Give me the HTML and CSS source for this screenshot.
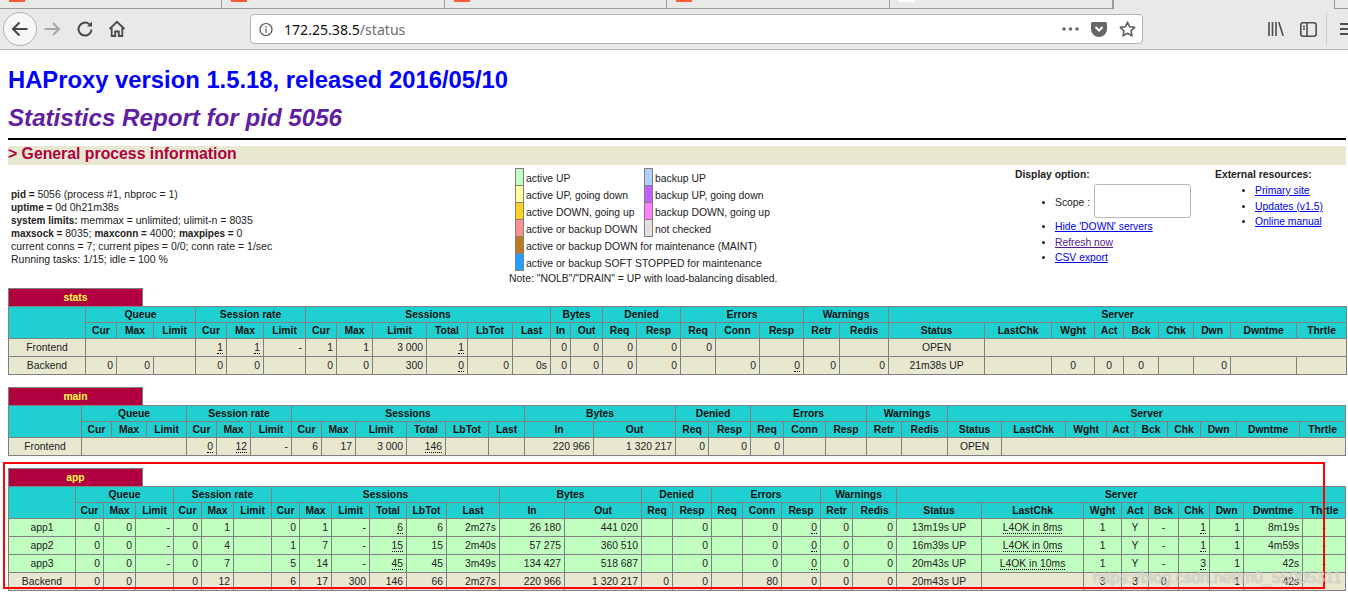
FILE: index.html
```html
<!DOCTYPE html>
<html lang="en">
<head>
<meta charset="utf-8">
<title>Statistics Report for HAProxy</title>
<link rel="stylesheet" href="styles.css">
</head>
<body>
<header class="chrome">
  <div class="tabstrip">
    <div class="tab"><i class="favicon"></i></div>
    <div class="tab"><i class="favicon"></i></div>
    <div class="tab"><i class="favicon"></i></div>
    <div class="tab"><i class="favicon"></i></div>
    <div class="tab tab-blank"><i class="favicon favicon-white"></i></div>
    <div class="tab tab-active"></div>
    <div class="tab tab-end"></div>
  </div>
  <div class="toolbar">
    <div class="btn-back">
      <svg width="20" height="20" viewBox="0 0 20 20" fill="none" stroke="#474747" stroke-width="2"><path d="M17.5 10H3M9.5 3.5 3 10l6.500 6.500"/></svg>
    </div>
    <div class="btn btn-fwd">
      <svg width="18" height="18" viewBox="0 0 18 18" fill="none" stroke="#a8a8a8" stroke-width="2"><path d="M1.500 9H16M10 3l6 6-6 6"/></svg>
    </div>
    <div class="btn">
      <svg width="18" height="18" viewBox="0 0 18 18" fill="none" stroke="#4a4a4a" stroke-width="2"><path d="M15.500 9.500A6.500 6.500 0 1 1 13.300 4.200"/><path d="M16 1.500v5h-5z" fill="#4a4a4a" stroke="none"/></svg>
    </div>
    <div class="btn">
      <svg width="18" height="18" viewBox="0 0 18 18" fill="none" stroke="#4a4a4a" stroke-width="1.800"><path d="M1.500 9 9 1.800 16.500 9"/><path d="M3.700 7.500V16h3.500v-4.500h3.600V16h3.500V7.500"/></svg>
    </div>
    <div class="urlbar">
      <svg class="info" width="14" height="14" viewBox="0 0 14 14" fill="none" stroke="#555" stroke-width="1.200"><circle cx="7" cy="7" r="6"/><path d="M7 6v4.500M7 3.400v1.500"/></svg>
      <span class="host">172.25.38.5</span><span class="path">/status</span>
      <span class="url-icons">
        <svg width="17" height="4" viewBox="0 0 17 4" fill="#6a6a6a"><circle cx="2" cy="2" r="1.800"/><circle cx="8.500" cy="2" r="1.800"/><circle cx="15" cy="2" r="1.800"/></svg>
        <svg width="16" height="15" viewBox="0 0 16 15"><path d="M1.500 0h13A1.500 1.500 0 0 1 16 1.500V7A8 8 0 0 1 0 7V1.500A1.500 1.500 0 0 1 1.500 0z" fill="#666"/><path d="M4.500 5 8 8.500 11.500 5" fill="none" stroke="#fff" stroke-width="2"/></svg>
        <svg width="17" height="16" viewBox="0 0 17 16" fill="none" stroke="#5f5f5f" stroke-width="1.600" stroke-linejoin="round"><path d="M8.500 1.200 10.700 5.800l5 .6-3.700 3.400 1 5-4.500-2.500-4.500 2.500 1-5L1.300 6.400l5-.6z"/></svg>
      </span>
    </div>
    <div class="btn btn-lib">
      <svg width="16" height="14" viewBox="0 0 16 14" fill="none" stroke="#4e4e4e" stroke-width="1.600"><path d="M1 0v14M4.500 0v14M8 0v14M10.800 0l4.400 14"/></svg>
    </div>
    <div class="btn">
      <svg width="17" height="15" viewBox="0 0 17 15" fill="none" stroke="#4e4e4e" stroke-width="1.600"><rect x=".8" y=".8" width="15.400" height="13.400" rx="2.500"/><path d="M7 1v13M3 4.500h2M3 7h2"/></svg>
    </div>
    <div class="tb-sep"></div>
    <div class="hamburger"><i></i><i></i><i></i></div>
  </div>
</header>

<main class="page">
  <h1>HAProxy version 1.5.18, released 2016/05/10</h1>
  <h2>Statistics Report for pid 5056</h2>
  <hr class="rule">
  <h3>&gt; General process information</h3>

  <section class="info">
    <p class="proc">
      <b>pid = </b>5056 (process #1, nbproc = 1)<br>
      <b>uptime = </b>0d 0h21m38s<br>
      <b>system limits:</b> memmax = unlimited; ulimit-n = 8035<br>
      <b>maxsock = </b>8035; <b>maxconn = </b>4000; <b>maxpipes = </b>0<br>
      current conns = 7; current pipes = 0/0; conn rate = 1/sec<br>
      Running tasks: 1/15; idle = 100 %
    </p>
    <div class="legend-col">
      <div class="legend">
        <div class="lg"><i class="sw sw-a1"></i>active UP</div>
        <div class="lg"><i class="sw sw-b1"></i>backup UP</div>
        <div class="lg"><i class="sw sw-a2"></i>active UP, going down</div>
        <div class="lg"><i class="sw sw-b2"></i>backup UP, going down</div>
        <div class="lg"><i class="sw sw-a3"></i>active DOWN, going up</div>
        <div class="lg"><i class="sw sw-b3"></i>backup DOWN, going up</div>
        <div class="lg"><i class="sw sw-a4"></i>active or backup DOWN</div>
        <div class="lg"><i class="sw sw-b4"></i>not checked</div>
        <div class="lg lg-wide"><i class="sw sw-a5"></i>active or backup DOWN for maintenance (MAINT)</div>
        <div class="lg lg-wide"><i class="sw sw-a6"></i>active or backup SOFT STOPPED for maintenance</div>
      </div>
      <p class="note">Note: "NOLB"/"DRAIN" = UP with load-balancing disabled.</p>
    </div>
    <div class="opts">
      <b>Display option:</b>
      <ul>
        <li class="scope">Scope : <input class="scope-input" type="text"></li>
        <li><a href="#hide">Hide 'DOWN' servers</a></li>
        <li><a class="visited" href="#refresh">Refresh now</a></li>
        <li><a href="#csv">CSV export</a></li>
      </ul>
    </div>
    <div class="opts ext">
      <b>External resources:</b>
      <ul>
        <li><a href="#site">Primary site</a></li>
        <li><a href="#updates">Updates (v1.5)</a></li>
        <li><a href="#manual">Online manual</a></li>
      </ul>
    </div>
  </section>

  <section class="proxy">
    <div class="pxname">stats</div>
    <table class="tbl tbl-stats">
      <colgroup><col><col><col><col><col><col><col><col><col><col><col><col><col><col><col><col><col><col><col><col><col><col><col><col><col><col><col><col><col><col><col></colgroup>
      <thead>
        <tr><th rowspan="2"></th><th colspan="3">Queue</th><th colspan="3">Session rate</th><th colspan="6">Sessions</th><th colspan="2">Bytes</th><th colspan="2">Denied</th><th colspan="3">Errors</th><th colspan="2">Warnings</th><th colspan="9">Server</th></tr>
        <tr><th>Cur</th><th>Max</th><th>Limit</th><th>Cur</th><th>Max</th><th>Limit</th><th>Cur</th><th>Max</th><th>Limit</th><th>Total</th><th>LbTot</th><th>Last</th><th>In</th><th>Out</th><th>Req</th><th>Resp</th><th>Req</th><th>Conn</th><th>Resp</th><th>Retr</th><th>Redis</th><th>Status</th><th>LastChk</th><th>Wght</th><th>Act</th><th>Bck</th><th>Chk</th><th>Dwn</th><th>Dwntme</th><th>Thrtle</th></tr>
      </thead>
      <tbody>
        <tr class="frontend"><td class="c">Frontend</td><td colspan="3"></td><td><u>1</u></td><td><u>1</u></td><td>-</td><td>1</td><td>1</td><td>3 000</td><td><u>1</u></td><td></td><td></td><td>0</td><td>0</td><td>0</td><td>0</td><td>0</td><td></td><td></td><td></td><td></td><td class="c">OPEN</td><td colspan="8"></td></tr>
        <tr class="backend"><td class="c">Backend</td><td>0</td><td>0</td><td></td><td>0</td><td>0</td><td></td><td>0</td><td>0</td><td>300</td><td><u>0</u></td><td>0</td><td>0s</td><td>0</td><td>0</td><td>0</td><td>0</td><td></td><td>0</td><td><u>0</u></td><td>0</td><td>0</td><td class="c">21m38s UP</td><td></td><td class="c">0</td><td class="c">0</td><td class="c">0</td><td></td><td>0</td><td></td><td></td></tr>
      </tbody>
    </table>
  </section>

  <section class="proxy">
    <div class="pxname">main</div>
    <table class="tbl tbl-main">
      <colgroup><col><col><col><col><col><col><col><col><col><col><col><col><col><col><col><col><col><col><col><col><col><col><col><col><col><col><col><col><col><col><col></colgroup>
      <thead>
        <tr><th rowspan="2"></th><th colspan="3">Queue</th><th colspan="3">Session rate</th><th colspan="6">Sessions</th><th colspan="2">Bytes</th><th colspan="2">Denied</th><th colspan="3">Errors</th><th colspan="2">Warnings</th><th colspan="9">Server</th></tr>
        <tr><th>Cur</th><th>Max</th><th>Limit</th><th>Cur</th><th>Max</th><th>Limit</th><th>Cur</th><th>Max</th><th>Limit</th><th>Total</th><th>LbTot</th><th>Last</th><th>In</th><th>Out</th><th>Req</th><th>Resp</th><th>Req</th><th>Conn</th><th>Resp</th><th>Retr</th><th>Redis</th><th>Status</th><th>LastChk</th><th>Wght</th><th>Act</th><th>Bck</th><th>Chk</th><th>Dwn</th><th>Dwntme</th><th>Thrtle</th></tr>
      </thead>
      <tbody>
        <tr class="frontend"><td class="c">Frontend</td><td colspan="3"></td><td><u>0</u></td><td><u>12</u></td><td>-</td><td>6</td><td>17</td><td>3 000</td><td><u>146</u></td><td></td><td></td><td>220 966</td><td>1 320 217</td><td>0</td><td>0</td><td>0</td><td></td><td></td><td></td><td></td><td class="c">OPEN</td><td colspan="8"></td></tr>
      </tbody>
    </table>
  </section>

  <section class="proxy">
    <div class="pxname">app</div>
    <table class="tbl tbl-app">
      <colgroup><col><col><col><col><col><col><col><col><col><col><col><col><col><col><col><col><col><col><col><col><col><col><col><col><col><col><col><col><col><col><col></colgroup>
      <thead>
        <tr><th rowspan="2"></th><th colspan="3">Queue</th><th colspan="3">Session rate</th><th colspan="6">Sessions</th><th colspan="2">Bytes</th><th colspan="2">Denied</th><th colspan="3">Errors</th><th colspan="2">Warnings</th><th colspan="9">Server</th></tr>
        <tr><th>Cur</th><th>Max</th><th>Limit</th><th>Cur</th><th>Max</th><th>Limit</th><th>Cur</th><th>Max</th><th>Limit</th><th>Total</th><th>LbTot</th><th>Last</th><th>In</th><th>Out</th><th>Req</th><th>Resp</th><th>Req</th><th>Conn</th><th>Resp</th><th>Retr</th><th>Redis</th><th>Status</th><th>LastChk</th><th>Wght</th><th>Act</th><th>Bck</th><th>Chk</th><th>Dwn</th><th>Dwntme</th><th>Thrtle</th></tr>
      </thead>
      <tbody>
        <tr class="active"><td class="c">app1</td><td>0</td><td>0</td><td>-</td><td>0</td><td>1</td><td></td><td>0</td><td>1</td><td>-</td><td><u>6</u></td><td>6</td><td>2m27s</td><td>26 180</td><td>441 020</td><td></td><td>0</td><td></td><td>0</td><td><u>0</u></td><td>0</td><td>0</td><td class="c">13m19s UP</td><td class="c"><u>L4OK in 8ms</u></td><td class="c">1</td><td class="c">Y</td><td class="c">-</td><td><u>1</u></td><td>1</td><td>8m19s</td><td class="c">-</td></tr>
        <tr class="active"><td class="c">app2</td><td>0</td><td>0</td><td>-</td><td>0</td><td>4</td><td></td><td>1</td><td>7</td><td>-</td><td><u>15</u></td><td>15</td><td>2m40s</td><td>57 275</td><td>360 510</td><td></td><td>0</td><td></td><td>0</td><td><u>0</u></td><td>0</td><td>0</td><td class="c">16m39s UP</td><td class="c"><u>L4OK in 0ms</u></td><td class="c">1</td><td class="c">Y</td><td class="c">-</td><td><u>1</u></td><td>1</td><td>4m59s</td><td class="c">-</td></tr>
        <tr class="active"><td class="c">app3</td><td>0</td><td>0</td><td>-</td><td>0</td><td>7</td><td></td><td>5</td><td>14</td><td>-</td><td><u>45</u></td><td>45</td><td>3m49s</td><td>134 427</td><td>518 687</td><td></td><td>0</td><td></td><td>0</td><td><u>0</u></td><td>0</td><td>0</td><td class="c">20m43s UP</td><td class="c"><u>L4OK in 10ms</u></td><td class="c">1</td><td class="c">Y</td><td class="c">-</td><td><u>3</u></td><td>1</td><td>42s</td><td class="c">-</td></tr>
        <tr class="backend"><td class="c">Backend</td><td>0</td><td>0</td><td></td><td>0</td><td>12</td><td></td><td>6</td><td>17</td><td>300</td><td>146</td><td>66</td><td>2m27s</td><td>220 966</td><td>1 320 217</td><td>0</td><td>0</td><td></td><td>80</td><td>0</td><td>0</td><td>0</td><td class="c">20m43s UP</td><td></td><td class="c">3</td><td class="c">3</td><td class="c">0</td><td></td><td>1</td><td>42s</td><td></td></tr>
      </tbody>
    </table>
  </section>
</main>

<div class="redbox"></div>
<div class="watermark">https://blog.csdn.net/m0_55005311</div>
</body>
</html>
```

FILE: styles.css
```css
html, body { margin: 0; padding: 0; height: 596px; overflow: hidden; background: #fff; }
body { position: relative; font-family: "Liberation Sans", Arial, sans-serif; font-size: 10.35px; color: #222; }

/* browser chrome */
.chrome { height: 50px; background: #e9e9e7; border-bottom: 1px solid #b5b5b5; box-sizing: border-box; }
.tabstrip { display: flex; height: 9px; box-sizing: border-box; border-bottom: 1px solid #9a9a9a; }
.tab { width: 222.500px; height: 8px; box-sizing: border-box; border-right: 1px solid #a0a0a0; position: relative; padding-left: 9px; flex: none; }
.tab:first-child { width: 222px; }
.favicon { display: block; width: 16px; height: 2px; background: #ff5a36; }
.favicon-white { background: #fff; }
.tab-active { height: 9px; width: 222px; background: #e9e9e7; border-left: 1px solid #9a9a9a; border-right: 1px solid #9a9a9a; margin-bottom: -1px; position: relative; }
.tab-end { border: 0; width: 15px; }
.tab-blank { width: 223px; }
.toolbar { display: flex; align-items: center; height: 40px; padding-left: 3px; }
.btn-back { width: 32px; height: 32px; border: 1px solid #b1b1b1; border-radius: 50%; background: #f7f7f7; display: flex; align-items: center; justify-content: center; flex: none; }
.btn { width: 32px; height: 32px; display: flex; align-items: center; justify-content: center; flex: none; }
.btn-fwd { margin-left: -1px; margin-right: 1px; }
.urlbar { margin-left: 117px; width: 893px; height: 30px; box-sizing: border-box; background: #fff; border: 1px solid #b4b4b4; border-radius: 4px; display: flex; align-items: center; padding-left: 8px; flex: none; font-family: "Noto Sans", sans-serif; font-size: 14.100px; }
.info { margin-right: 11px; flex: none; }
.host { color: #111; }
.path { color: #6e6e6e; }
.url-icons { margin-left: auto; display: flex; align-items: center; gap: 12px; padding-right: 6px; }
.btn-lib { margin-left: 117px; }
.tb-sep { width: 1px; height: 34px; background: #cfcfcf; margin-left: 2px; flex: none; }
.hamburger { margin-left: 13px; display: flex; flex-direction: column; gap: 3px; flex: none; width: 10px; overflow: hidden; }
.hamburger i { display: block; height: 2px; width: 16px; background: #4e4e4e; }

/* page */
.page { padding: 0 2px 0 8px; }
h1 { margin: 16px 0 0; font-size: 23.800px; line-height: 27px; font-weight: bold; color: #0000ff; }
h2 { margin: 11px 0 0; font-size: 24.150px; line-height: 27px; font-weight: bold; font-style: italic; color: #6020a0; }
.rule { margin: 7px 0 0; height: 2px; border: 0; background: #000; }
h3 { margin: 6px 0 0; height: 19px; font-size: 15.800px; line-height: 16px; font-weight: bold; color: #b00040; background: #e8e8d0; }

.info { display: flex; height: 123px; }
.proc { margin: 23px 0 0; padding-left: 3px; width: 498px; flex: none; line-height: 13px; font-size: 10.500px; }
.proc b { font-size: 10px; }
.legend-col { width: 506px; flex: none; padding-top: 3px; font-size: 10.400px; }
.legend { display: grid; grid-template-columns: 129px 1fr; grid-auto-rows: 17px; padding-left: 6px; }
.lg { display: flex; align-items: flex-start; white-space: nowrap; line-height: 22px; }
.lg-wide { grid-column: 1 / -1; }
.sw { width: 7px; border: 1px solid #808080; box-sizing: content-box; margin-right: 2px; flex: none; height: 16px; }
.sw-a1 { background: #c0ffc0; }
.sw-a2 { background: #ffffa0; }
.sw-a3 { background: #ffd020; }
.sw-a4 { background: #ff9090; }
.sw-a5 { background: #c07820; }
.sw-a6 { background: #20a0ff; }
.sw-b1 { background: #b0d0ff; }
.sw-b2 { background: #c060ff; }
.sw-b3 { background: #ff80ff; }
.sw-b4 { background: #e0e0e0; }
.note { margin: 2px 0 0; line-height: 13px; }
.opts { width: 200px; flex: none; padding-top: 3px; line-height: 13px; }
.ext { width: auto; }
.opts ul { margin: 3px 0 0; padding: 0 0 0 40px; }
.opts.ext ul { margin-top: 2px; }
.opts li { line-height: 15.500px; }
.opts li.scope { margin-bottom: -4px; }
.scope-input { width: 97px; height: 34px; box-sizing: border-box; border: 1px solid #b8b8b8; border-radius: 3px; vertical-align: middle; padding: 0; background: #fff; margin: 0 0 5px 1px; }
a { color: #0000ee; }
a.visited { color: #551a8b; }

/* proxy tables */
.proxy { margin-bottom: 12px; }
.pxname { width: 135px; height: 19px; box-sizing: border-box; border: 1px solid #808080; background: #b00040; color: #ffff40; font-weight: bold; text-align: center; line-height: 17px; margin-bottom: -1px; position: relative; }
.tbl { border-collapse: collapse; table-layout: fixed; width: 1338px; }
.tbl th { height: 16px; padding: 0; background: #20d0d0; border: 1px solid #808080; font-weight: bold; text-align: center; color: #111; box-sizing: border-box; white-space: nowrap; }
.tbl td { height: 18px; padding: 0 3px 0 0; border: 1px solid #808080; background: #e8e8d0; text-align: right; box-sizing: border-box; white-space: nowrap; }
.tbl td.c { text-align: center; padding: 0; }
.tbl .active td { background: #c0ffc0; }
u { text-decoration: none; border-bottom: 1px dotted #000; }

.tbl-stats col:nth-child(1){width:77px}.tbl-stats col:nth-child(2){width:31px}.tbl-stats col:nth-child(3){width:37px}.tbl-stats col:nth-child(4){width:42px}.tbl-stats col:nth-child(5){width:31px}.tbl-stats col:nth-child(6){width:37px}.tbl-stats col:nth-child(7){width:42px}.tbl-stats col:nth-child(8){width:31px}.tbl-stats col:nth-child(9){width:36px}.tbl-stats col:nth-child(10){width:54px}.tbl-stats col:nth-child(11){width:41px}.tbl-stats col:nth-child(12){width:45px}.tbl-stats col:nth-child(13){width:38px}.tbl-stats col:nth-child(14){width:20px}.tbl-stats col:nth-child(15){width:32px}.tbl-stats col:nth-child(16){width:34px}.tbl-stats col:nth-child(17){width:44px}.tbl-stats col:nth-child(18){width:35px}.tbl-stats col:nth-child(19){width:44px}.tbl-stats col:nth-child(20){width:44px}.tbl-stats col:nth-child(21){width:36px}.tbl-stats col:nth-child(22){width:49px}.tbl-stats col:nth-child(23){width:96px}.tbl-stats col:nth-child(24){width:67px}.tbl-stats col:nth-child(25){width:43px}.tbl-stats col:nth-child(26){width:29px}.tbl-stats col:nth-child(27){width:35px}.tbl-stats col:nth-child(28){width:35px}.tbl-stats col:nth-child(29){width:37px}.tbl-stats col:nth-child(30){width:66px}.tbl-stats col:nth-child(31){width:50px}

.tbl-main col:nth-child(1){width:73px}.tbl-main col:nth-child(2){width:30px}.tbl-main col:nth-child(3){width:35px}.tbl-main col:nth-child(4){width:40px}.tbl-main col:nth-child(5){width:30px}.tbl-main col:nth-child(6){width:34px}.tbl-main col:nth-child(7){width:41px}.tbl-main col:nth-child(8){width:30px}.tbl-main col:nth-child(9){width:34px}.tbl-main col:nth-child(10){width:51px}.tbl-main col:nth-child(11){width:39px}.tbl-main col:nth-child(12){width:43px}.tbl-main col:nth-child(13){width:36px}.tbl-main col:nth-child(14){width:69px}.tbl-main col:nth-child(15){width:82px}.tbl-main col:nth-child(16){width:33px}.tbl-main col:nth-child(17){width:42px}.tbl-main col:nth-child(18){width:33px}.tbl-main col:nth-child(19){width:42px}.tbl-main col:nth-child(20){width:41px}.tbl-main col:nth-child(21){width:35px}.tbl-main col:nth-child(22){width:46px}.tbl-main col:nth-child(23){width:54px}.tbl-main col:nth-child(24){width:64px}.tbl-main col:nth-child(25){width:41px}.tbl-main col:nth-child(26){width:28px}.tbl-main col:nth-child(27){width:33px}.tbl-main col:nth-child(28){width:33px}.tbl-main col:nth-child(29){width:36px}.tbl-main col:nth-child(30){width:63px}.tbl-main col:nth-child(31){width:46px}

.tbl-app col:nth-child(1){width:67px}.tbl-app col:nth-child(2){width:28px}.tbl-app col:nth-child(3){width:32px}.tbl-app col:nth-child(4){width:38px}.tbl-app col:nth-child(5){width:28px}.tbl-app col:nth-child(6){width:32px}.tbl-app col:nth-child(7){width:38px}.tbl-app col:nth-child(8){width:28px}.tbl-app col:nth-child(9){width:32px}.tbl-app col:nth-child(10){width:38px}.tbl-app col:nth-child(11){width:37px}.tbl-app col:nth-child(12){width:40px}.tbl-app col:nth-child(13){width:53px}.tbl-app col:nth-child(14){width:65px}.tbl-app col:nth-child(15){width:77px}.tbl-app col:nth-child(16){width:31px}.tbl-app col:nth-child(17){width:39px}.tbl-app col:nth-child(18){width:31px}.tbl-app col:nth-child(19){width:39px}.tbl-app col:nth-child(20){width:39px}.tbl-app col:nth-child(21){width:32px}.tbl-app col:nth-child(22){width:44px}.tbl-app col:nth-child(23){width:85px}.tbl-app col:nth-child(24){width:102px}.tbl-app col:nth-child(25){width:38px}.tbl-app col:nth-child(26){width:27px}.tbl-app col:nth-child(27){width:30px}.tbl-app col:nth-child(28){width:31px}.tbl-app col:nth-child(29){width:34px}.tbl-app col:nth-child(30){width:59px}.tbl-app col:nth-child(31){width:43px}

/* annotation layered over the screenshot */
.redbox { position: absolute; left: 3px; top: 462px; width: 1322px; height: 127px; box-sizing: border-box; border: 2px solid #f00; }
.watermark { position: absolute; left: 1093px; top: 567px; font-size: 16px; line-height: 22px; color: rgba(255,255,255,.6); text-shadow: 0 0 1px rgba(110,110,110,.7); white-space: nowrap; }
```
